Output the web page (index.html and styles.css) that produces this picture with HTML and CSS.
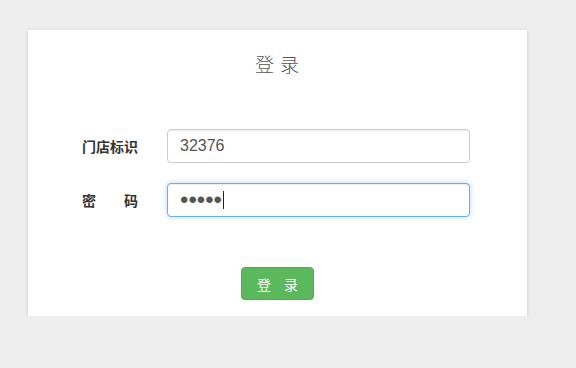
FILE: index.html
```html
<!DOCTYPE html>
<html lang="zh">
<head>
<meta charset="utf-8">
<title>登录</title>
<link rel="stylesheet" href="styles.css">
</head>
<body>
<div class="card">
  <h1 class="title">登 录</h1>
  <form class="form">
    <div class="row">
      <label class="label">门店标识</label>
      <input class="field" type="text" value="32376">
    </div>
    <div class="row">
      <label class="label spread"><span>密</span><span>码</span></label>
      <div class="field-wrap">
        <input class="field focused" type="password" value="11111">
        <span class="caret"></span>
      </div>
    </div>
    <div class="actions">
      <button class="btn" type="button">登 录</button>
    </div>
  </form>
</div>
</body>
</html>
```

FILE: styles.css
```css
html, body {
  margin: 0;
  padding: 0;
  background: #eeeeee;
  font-family: "Noto Sans CJK SC", "Liberation Sans", sans-serif;
}
body {
  padding-top: 30px;
}
.card {
  margin-left: 28px;
  width: 499px;
  height: 286px;
  background: #fff;
  box-shadow: 0 1px 4px rgba(0,0,0,0.15);
  box-sizing: border-box;
}
.title {
  margin: 0;
  padding-top: 21px;
  text-align: center;
  font-size: 19px;
  line-height: 26px;
  font-weight: 300;
  color: #555;
  letter-spacing: 1px;
}
.form {
  margin-top: 52px;
  padding-left: 54px;
}
.row {
  display: flex;
  align-items: center;
  height: 34px;
  margin-bottom: 20px;
}
.label {
  flex-shrink: 0;
  width: 56px;
  margin-right: 29px;
  font-size: 14px;
  font-weight: 700;
  color: #333;
  white-space: nowrap;
  display: flex;
  justify-content: space-between;
}
.field-wrap {
  position: relative;
  display: flex;
}
.field {
  width: 303px;
  height: 34px;
  box-sizing: border-box;
  border: 1px solid #ccc;
  border-radius: 4px;
  padding: 0 12px;
  font-family: "Liberation Sans", sans-serif;
  font-size: 16px;
  color: #555;
  background: #fff;
  outline: none;
  box-shadow: inset 0 1px 1px rgba(0,0,0,0.075);
}
.field.focused {
  border-color: #66afe9;
  box-shadow: inset 0 1px 1px rgba(0,0,0,0.075), 0 0 5px rgba(102,175,233,0.5);
  font-size: 24px;
  color: #555;
}
.caret {
  position: absolute;
  left: 56px;
  top: 8px;
  width: 1px;
  height: 18px;
  background: #222;
}
.actions {
  padding-left: 159px;
  margin-top: 50px;
}
.btn {
  width: 73px;
  height: 33px;
  border: 1px solid #4cae4c;
  border-radius: 4px;
  background: #5cb85c;
  color: #fff;
  font-family: "Noto Sans CJK SC", sans-serif;
  font-size: 14px;
  letter-spacing: 5px;
  padding: 0 0 0 5px;
  cursor: pointer;
}
```
